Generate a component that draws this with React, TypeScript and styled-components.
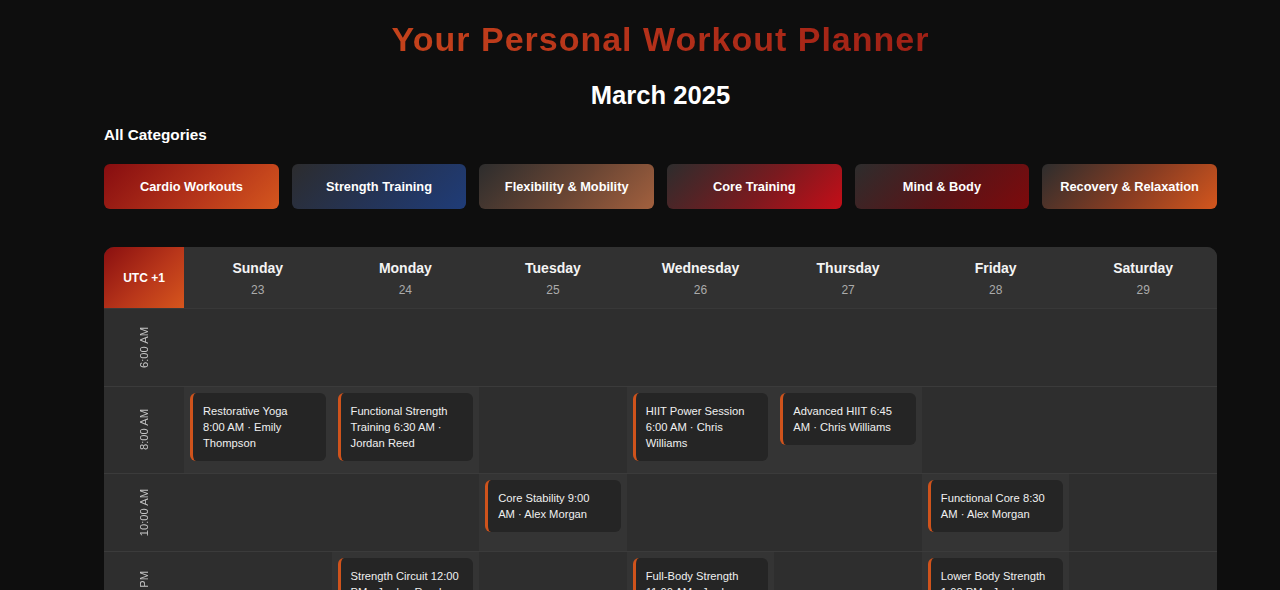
import React from "react";
import styled, { createGlobalStyle } from "styled-components";

const GlobalStyle = createGlobalStyle`
  html, body {
    margin: 0;
    padding: 0;
    background: #0e0e0e;
    font-family: "Liberation Sans", Arial, sans-serif;
    color: #f2f2f2;
  }
  * { box-sizing: border-box; }
`;

const Page = styled.div`
  padding: 19px 63px 40px 104px;
`;

const Title = styled.h1`
  margin: 0;
  text-align: center;
  font-size: 34px;
  line-height: 40px;
  font-weight: 700;
  letter-spacing: 1px;
  background: linear-gradient(90deg, #d6561d 0%, #b3301a 50%, #8a0f10 100%);
  -webkit-background-clip: text;
  background-clip: text;
  color: transparent;
`;

const MonthTitle = styled.h2`
  margin: 21px 0 0;
  text-align: center;
  font-size: 25.6px;
  line-height: 30px;
  font-weight: 700;
  color: #ffffff;
`;

const SectionLabel = styled.h3`
  margin: 16px 0 0;
  font-size: 15.3px;
  line-height: 18px;
  font-weight: 700;
  color: #ffffff;
`;

const CategoryGrid = styled.div`
  display: grid;
  grid-template-columns: repeat(6, 1fr);
  gap: 12.8px;
  margin-top: 20px;
`;

const CategoryButton = styled.button<{ $bg: string }>`
  height: 45px;
  border: none;
  border-radius: 6px;
  background: ${(p) => p.$bg};
  color: #ffffff;
  font-family: "Liberation Sans", Arial, sans-serif;
  font-size: 12.8px;
  font-weight: 700;
  cursor: pointer;
`;

const Calendar = styled.div`
  margin-top: 38px;
  border-radius: 10px;
  overflow: hidden;
  display: grid;
  grid-template-columns: 80px repeat(7, 1fr);
  background: #2d2d2d;
`;

const ZoneCell = styled.div`
  display: flex;
  align-items: center;
  justify-content: center;
  background: linear-gradient(135deg, #8a0f10 0%, #b8361a 55%, #d6561d 100%);
  font-size: 12px;
  font-weight: 700;
  color: #ffffff;
  border-bottom: 1px solid #383838;
`;

const DayHead = styled.div`
  display: flex;
  flex-direction: column;
  align-items: center;
  gap: 5px;
  padding: 12px 0 10px;
  background: #313131;
  border-bottom: 1px solid #383838;
`;

const DayName = styled.div`
  font-size: 14px;
  line-height: 18px;
  font-weight: 700;
  color: #f4f4f4;
`;

const DayDate = styled.div`
  font-size: 12px;
  line-height: 16px;
  color: #ababab;
`;

const TimeCell = styled.div`
  display: flex;
  align-items: center;
  justify-content: center;
  min-height: 78px;
  border-bottom: 1px solid #3b3b3b;
  background: #2e2e2e;
`;

const TimeLabel = styled.span`
  writing-mode: vertical-rl;
  transform: rotate(180deg);
  font-size: 11.2px;
  color: #c4c4c4;
  white-space: nowrap;
`;

const SlotCell = styled.div<{ $filled: boolean }>`
  padding: 6px;
  min-height: 78px;
  border-bottom: 1px solid #3b3b3b;
  background: ${(p) => (p.$filled ? "#343434" : "#2e2e2e")};
`;

const EventCard = styled.div`
  margin-bottom: 6px;
  padding: 10px 14px 10px 10px;
  background: #252525;
  border-left: 3px solid #cf531c;
  border-radius: 6px;
  font-size: 11.2px;
  line-height: 16px;
  color: #f0f0f0;
`;

type Ev = { title: string; time: string; coach: string };

const days = [
  { name: "Sunday", date: 23 },
  { name: "Monday", date: 24 },
  { name: "Tuesday", date: 25 },
  { name: "Wednesday", date: 26 },
  { name: "Thursday", date: 27 },
  { name: "Friday", date: 28 },
  { name: "Saturday", date: 29 },
];

const categories = [
  { label: "Cardio Workouts", bg: "linear-gradient(135deg, #870d10 0%, #b3331a 55%, #d5571e 100%)" },
  { label: "Strength Training", bg: "linear-gradient(135deg, #2c2c2e 0%, #243458 55%, #1f3c78 100%)" },
  { label: "Flexibility & Mobility", bg: "linear-gradient(135deg, #2d2d2d 0%, #6b4634 55%, #a2603e 100%)" },
  { label: "Core Training", bg: "linear-gradient(135deg, #2d2d2d 0%, #7a1a1f 55%, #c40e18 100%)" },
  { label: "Mind & Body", bg: "linear-gradient(135deg, #2d2d2d 0%, #5a1417 55%, #7e0a0c 100%)" },
  { label: "Recovery & Relaxation", bg: "linear-gradient(135deg, #2d2d2d 0%, #8a3d22 55%, #d4561d 100%)" },
];

const times = ["6:00 AM", "8:00 AM", "10:00 AM", "12:00 PM", "2:00 PM", "4:00 PM", "6:00 PM"];

const schedule: Record<string, Ev[]> = {
  "1-0": [{ title: "Restorative Yoga", time: "8:00 AM", coach: "Emily Thompson" }],
  "1-1": [{ title: "Functional Strength Training", time: "6:30 AM", coach: "Jordan Reed" }],
  "1-3": [{ title: "HIIT Power Session", time: "6:00 AM", coach: "Chris Williams" }],
  "1-4": [{ title: "Advanced HIIT", time: "6:45 AM", coach: "Chris Williams" }],
  "2-2": [{ title: "Core Stability", time: "9:00 AM", coach: "Alex Morgan" }],
  "2-5": [{ title: "Functional Core", time: "8:30 AM", coach: "Alex Morgan" }],
  "3-1": [{ title: "Strength Circuit", time: "12:00 PM", coach: "Jordan Reed" }],
  "3-3": [{ title: "Full-Body Strength", time: "11:00 AM", coach: "Jordan Reed" }],
  "3-5": [{ title: "Lower Body Strength", time: "1:00 PM", coach: "Jordan Reed" }],
  "4-2": [{ title: "Mobility Flow", time: "2:00 PM", coach: "Emily Thompson" }],
  "5-4": [{ title: "Cardio Blast", time: "4:30 PM", coach: "Chris Williams" }],
  "6-6": [{ title: "Evening Stretch", time: "6:00 PM", coach: "Emily Thompson" }],
};

export default function App() {
  return (
    <>
      <GlobalStyle />
      <Page>
        <Title>Your Personal Workout Planner</Title>
        <MonthTitle>March 2025</MonthTitle>
        <SectionLabel>All Categories</SectionLabel>
        <CategoryGrid>
          {categories.map((c) => (
            <CategoryButton key={c.label} $bg={c.bg}>
              {c.label}
            </CategoryButton>
          ))}
        </CategoryGrid>
        <Calendar>
          <ZoneCell>UTC +1</ZoneCell>
          {days.map((d) => (
            <DayHead key={d.name}>
              <DayName>{d.name}</DayName>
              <DayDate>{d.date}</DayDate>
            </DayHead>
          ))}
          {times.map((t, ti) => (
            <React.Fragment key={t}>
              <TimeCell>
                <TimeLabel>{t}</TimeLabel>
              </TimeCell>
              {days.map((d, di) => {
                const evs = schedule[`${ti}-${di}`] || [];
                return (
                  <SlotCell key={d.name} $filled={evs.length > 0}>
                    {evs.map((e) => (
                      <EventCard key={e.title}>
                        {e.title} {e.time} · {e.coach}
                      </EventCard>
                    ))}
                  </SlotCell>
                );
              })}
            </React.Fragment>
          ))}
        </Calendar>
      </Page>
    </>
  );
}
